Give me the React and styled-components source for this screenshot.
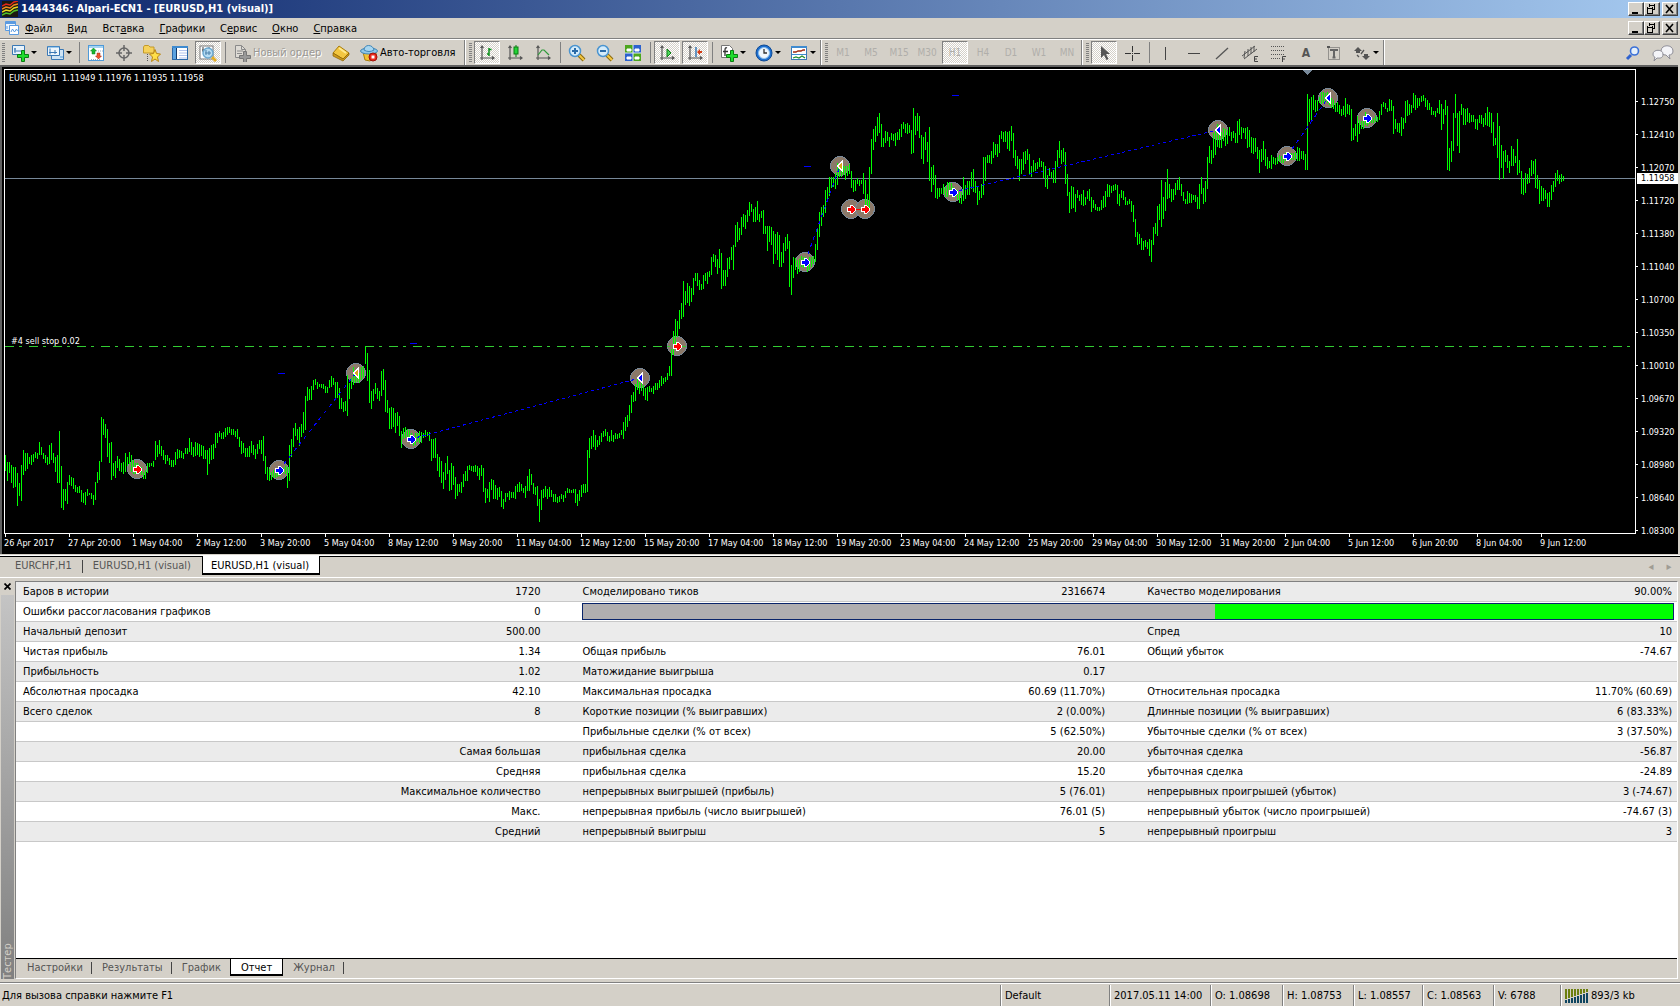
import React, { useState } from 'react'
import styled, { createGlobalStyle, css } from 'styled-components'

const menu = [['', 'Ф', 'айл'], ['', 'В', 'ид'], ['Вст', 'а', 'вка'], ['', 'Г', 'рафики'], ['С', 'е', 'рвис'], ['', 'О', 'кно'], ['', 'С', 'правка']]
const periods = ['M1', 'M5', 'M15', 'M30', 'H1', 'H4', 'D1', 'W1', 'MN']
const chartTabs = ['EURCHF,H1', 'EURUSD,H1 (visual)', 'EURUSD,H1 (visual)']
const testerTabs = ['Настройки', 'Результаты', 'График', 'Отчет', 'Журнал']
const prices = ['1.12750', '1.12410', '1.12070', '1.11720', '1.11380', '1.11040', '1.10700', '1.10350', '1.10010', '1.09670', '1.09320', '1.08980', '1.08640', '1.08300']
const times = ['26 Apr 2017', '27 Apr 20:00', '1 May 04:00', '2 May 12:00', '3 May 20:00', '5 May 04:00', '8 May 12:00', '9 May 20:00', '11 May 04:00', '12 May 12:00', '15 May 20:00', '17 May 04:00', '18 May 12:00', '19 May 20:00', '23 May 04:00', '24 May 12:00', '25 May 20:00', '29 May 04:00', '30 May 12:00', '31 May 20:00', '2 Jun 04:00', '5 Jun 12:00', '6 Jun 20:00', '8 Jun 04:00', '9 Jun 12:00']
const report = [
    ['Баров в истории', '1720', 'Смоделировано тиков', '2316674', 'Качество моделирования', '90.00%'],
    ['Ошибки рассогласования графиков', '0'],
    ['Начальный депозит', '500.00', '', '', 'Спред', '10'],
    ['Чистая прибыль', '1.34', 'Общая прибыль', '76.01', 'Общий убыток', '-74.67'],
    ['Прибыльность', '1.02', 'Матожидание выигрыша', '0.17', '', ''],
    ['Абсолютная просадка', '42.10', 'Максимальная просадка', '60.69 (11.70%)', 'Относительная просадка', '11.70% (60.69)'],
    ['Всего сделок', '8', 'Короткие позиции (% выигравших)', '2 (0.00%)', 'Длинные позиции (% выигравших)', '6 (83.33%)'],
    ['', '', 'Прибыльные сделки (% от всех)', '5 (62.50%)', 'Убыточные сделки (% от всех)', '3 (37.50%)'],
    ['', 'Самая большая', 'прибыльная сделка', '20.00', 'убыточная сделка', '-56.87'],
    ['', 'Средняя', 'прибыльная сделка', '15.20', 'убыточная сделка', '-24.89'],
    ['', 'Максимальное количество', 'непрерывных выигрышей (прибыль)', '5 (76.01)', 'непрерывных проигрышей (убыток)', '3 (-74.67)'],
    ['', 'Макс.', 'непрерывная прибыль (число выигрышей)', '76.01 (5)', 'непрерывный убыток (число проигрышей)', '-74.67 (3)'],
    ['', 'Средний', 'непрерывный выигрыш', '5', 'непрерывный проигрыш', '3'],
]
const status = [['Default', 109], ['2017.05.11 14:00', 101], ['O: 1.08698', 72], ['H: 1.08753', 71], ['L: 1.08557', 69], ['C: 1.08563', 71], ['V: 6788', 67]]

// high/low of every bar, three units to a pixel, counted down from base
const segments = [
    { x: 5, base: 330, bars: '375/423 395/452 395/428 405/458 410/475 410/470 430/527 458/498 405/512 360/435 368/422 370/418 380/402 375/405 372/395 365/385 368/388 336/375 350/375 368/388 375/400 380/405 345/402 340/390 370/398 380/425 375/458 303/458 408/535 476/540 476/512 457/522 434/465 442/468 445/478 465/485 470/488 468/490 480/515 488/518 485/524 477/498 488/496 488/508 495/524 455/510 426/460 392/450 261/396 266/315 282/325 297/382 338/398 336/450 400/437 392/444 378/414 388/424 398/426 396/432 370/426 380/408 366/402 376/426 390/432 400/432 400/430 405/430 410/435 425/447 420/447 400/428 398/412 400/408 392/412 333/390 345/382 330/372 348/378 360/390 375/403 375/392 385/405 390/410 390/410 365/405 358/387 360/385 362/385 370/387 355/372 353/372 323/365 335/375 350/380 335/378 338/376 343/380 345/378 348/388 360/388 360/434 355/402 345/390 342/388 310/353 308/340 303/322 310/328 306/326 293/320 292/315 290/310 298/316 297/316 303/320 297/328 320/352 334/372 340/368 353/382 353/380 348/382 332/368 345/375 358/388 342/372 330/356 330/372 318/392 378/432 410/450 418/452 425/450 420/445 420/443 415/440 418/438 412/432 415/430 408/432 412/474 345/452 327/380 294/350 279/317 297/330 290/347 283/320 246/310 197/300 170/213 178/210 168/210 150/180 148/166 156/176 163/172 162/175 163/178 168/188 170/190 150/175 138/172 144/165 156/208 155/205 175/238 205/238 215/246 213/242 135/258 160/208 145/178 110/165 120/160 115/157 130/158 110/150 108/140 48/102 68/152 120/220 184/236 178/214 158/193 175/208 184/212 122/198 116/180 150/246 210/250 234/298 232/297 234/290 250/308 247/288 258/318' },
    { x: 401, base: 330, bars: '303/353 295/328 291/325 298/330 300/335 310/340 318/347 310/345 308/335 303/340 305/340 310/325 300/322 306/318 306/332 326/392 327/383 324/383 372/422 380/440 393/458 426/477 400/450 378/432 420/483 398/480 408/465 441/507 462/498 462/487 456/488 432/470 423/452 408/452 405/420 408/424 407/426 405/425 408/438 414/450 405/438 414/487 474/518 477/505 456/517 447/480 450/507 465/507 474/510 471/500 483/530 507/537 489/515 488/500 483/510 486/503 486/504 468/507 462/486 456/486 462/484 474/490 468/503 438/482 417/483 432/464 459/492 471/495 468/528 507/576 480/540 477/503 468/500 478/508 471/500 480/500 492/515 492/516 501/518 498/516 492/506 495/516 483/503 474/490 476/488 480/490 477/490 477/518 492/528 480/512 465/500 462/490 462/488 360/486 324/384 318/357 300/350 315/360 330/350 318/345 309/336 304/322 297/318 306/332 318/335 300/333 315/336 309/328 311/328 309/325 300/315 276/327 262/303 255/290 225/273 195/248 186/216 162/213 147/180 155/192 150/182 165/198 174/210 171/213 168/186 174/186 168/192 159/180 159/180 150/174 138/168 144/162 141/155 129/150 108/138 57/138' },
    { x: 673, base: 60, bars: '813/885 777/860 783/830 750/807 729/777 663/771 693/735 669/730 678/738 684/726 654/705 639/663 640/678 660/690 672/690 645/687 639/663 636/672 633/651 591/645 582/606 585/621 597/642 567/624 579/687 630/678 630/678 594/651 591/627 561/600 555/630 495/561 486/546 504/540 471/525 462/501 465/507 450/486 426/468 432/456 447/486 441/486 423/480 462/486 453/474 450/522 498/522 498/573 498/546 501/555 513/612 522/582 516/600 525/621 576/621 549/609 531/573 522/567 543/681 615/705 591/654 594/630 600/642 597/636 588/620 592/625 590/620 598/636 590/630 590/620 588/612 552/606 504/570 456/531 441/498 435/471 390/459 381/417 351/408 351/384 351/380 340/387 310/375 320/350 320/350 318/345 318/360 318/348 312/342 333/384 360/396 360/393 354/372 360/378 359/372 339/402 360/435 402/445 321/444 237/342 207/270 198/246 171/228 159/219 192/261 234/261 213/249 216/243 231/261 219/240 222/243 219/258 216/240 207/240 192/231 186/207 192/219 189/222 195/219 210/282 144/279 168/225 159/213 168/234 225/297 231/312 216/270 246/306 201/363 321/396 315/375 345/414 384/417 384/411 384/402 372/402 380/410 366/410 366/400 368/405 380/410 388/410 390/420 395/428 395/432 351/423 375/417 363/405 363/405 336/387 327/396 363/399 378/435 393/420 372/414 291/405 291/363 285/309 285/309 273/312 246/294 252/285 252/291 225/279 213/237 216/246 213/246 216/267 213/273 198/243 219/294 270/318 288/327 297/363 297/342 276/330 273/312 267/300 282/342 318/351 300/336 309/333 306/327 294/321' },
    { x: 1041, base: 60, bars: '303/321 306/354 318/381 345/387 324/348 336/354 330/369 303/369 270/321 243/294 270/312 264/306 276/372 342/408 396/459 378/447 381/444 402/456 390/414 405/423 402/435 390/438 411/435 393/417 387/423 411/456 420/444 432/450 441/453 441/453 420/450 408/444 393/441 372/411 375/411 378/399 375/393 372/390 375/432 402/438 390/414 393/420 411/435 423/435 417/432 423/456 435/486 477/531 516/555 522/552 534/570 543/570 540/561 546/567 537/588 540/606 501/555 489/522 438/528 432/480 360/501 411/477 366/453 327/417 372/414 387/426 387/420 369/405 360/390 351/390 372/408 396/423 417/432 393/432 399/429 402/429 405/420 405/426 411/447 372/447 351/402 384/432 363/426 291/387 258/309 270/312 220/294 210/285 192/260 220/264 215/264 204/243 207/258 210/252 201/228 216/243 213/234 219/249 183/249 177/225 201/237 204/219 204/237 201/264 210/261 231/279 234/282 234/276 261/297 270/339 267/306 243/300 267/318 291/327 303/324 285/327 291/312 294/315 290/312 285/306 288/308 288/308 278/303 283/300 278/298 280/300 280/300 275/300 261/303 264/303 273/297 273/300 282/330 102/330 117/186 111/180 105/150 120/156 120/153 110/130 95/132 95/130 100/125 95/130 105/135 114/144 120/147 129/156 126/156 135/162 147/168 138/165 114/171 132/162 135/165 147/243 204/240 192/228 168/246 180/222' },
    { x: 1361, base: 60, bars: '183/207 183/207 156/195 165/198 170/192 172/190 174/190 168/186 170/186 153/180 132/165 126/141 129/147 144/156 117/153 120/153 138/222 177/207 189/216 189/219 171/228 174/207 123/189 120/168 132/165 135/159 99/144 105/150 114/144 114/138 108/126 105/123 114/141 120/150 129/150 141/165 153/165 153/171 144/159 120/162 132/210 147/192 120/165 138/330 264/333 243/306 159/273 102/174 159/258 153/279 132/165 144/195 147/195 144/186 159/189 165/186 165/186 177/207 177/210 165/189 165/192 174/201 159/195 141/198 156/201 159/219 186/258 234/255 159/294 198/360 255/324 273/357 270/306 285/324 303/339 258/318 267/318 288/309 237/345 300/339 333/402 357/405 339/399 342/372 324/369 300/348 303/342 297/384 345/387 360/432 378/423 384/423 390/417 399/441 396/441 375/420 363/396 339/381 330/363 345/372 342/366 348/363' },
]
const barsPath = segments.map(({ x, base, bars }) => bars.split(' ').map((bar, i) => {
    const [high, low] = bar.split('/').map(v => Math.round(base + v / 3))
    return `M${x + i * 2 + 0.5} ${high}V${low}`
}).join('')).join('')

const markers = [
    [137, 469, 'open', '#f00'], [279, 470, 'open', '#00f'], [356, 373, 'close', '#daa520'], [411, 439, 'open', '#00f'],
    [640, 378, 'close', '#00f'], [677, 346, 'open', '#f00'], [805, 262, 'open', '#00f'], [840, 166, 'close', '#daa520'],
    [851, 209, 'open', '#f00'], [865, 209, 'open', '#f00'], [953, 192, 'open', '#00f'], [1218, 130, 'close', '#00f'],
    [1287, 156, 'open', '#00f'], [1328, 98, 'close', '#00f'], [1367, 118, 'open', '#00f'],
]

function Chart() {
    return (
        <svg width="1630" height="463" viewBox="5 70 1630 463" fill="none" shapeRendering="crispEdges">
            <path d="M5 178.5H1635" stroke="#778899" />
            {markers.map(([x, y]) => <circle key={`${x}-${y}`} cx={x} cy={y} r="9.5" fill="#8b7969" stroke="#778899" />)}
            <path d="M5 346.5H1635" stroke="#32cd32" strokeDasharray="9 5 3 7" />
            <path d={barsPath} stroke="#0f0" />
            <g stroke="#00f">
                <path d="M279 470L356 373M805 262L840 166M1287 156L1328 98" strokeDasharray="4 4" />
                <path d="M411 439L640 378M953 192L1218 130" strokeDasharray="3 3" />
                <path d="M278 373.5h7M410 343.5h7M804 166.5h7M952 95.5h7" />
            </g>
            <path d="M851 209.5H865" stroke="#f00" />
            <path d="M1302 70h10l-5 5z" fill="#778899" />
            {markers.map(([x, y, kind, color]) => (
                <path
                    key={`${x}-${y}`}
                    d={kind === 'open'
                        ? `M${x - 3} ${y - 1}h3v-2h1l3 3v1l-3 3h-1v-2h-3z`
                        : `M${x + 2} ${y - 4}v8l-4 -4z`}
                    fill={color}
                    stroke="#fff"
                    strokeWidth="2"
                    paintOrder="stroke"
                />
            ))}
        </svg>
    )
}

const Lens = ({ minus }) => (
    <>
        <path d="M11 11l5 5" stroke="#8a6a10" strokeWidth="4" />
        <path d="M11 11l5 5" stroke="#f5c842" strokeWidth="2" />
        <circle cx="7" cy="7" r="5.500" fill="#d5ecfb" stroke="#4a94d0" strokeWidth="1.500" />
        <path d={minus ? 'M4 7h6' : 'M4 7h6M7 4v6'} stroke="#2a6ba8" strokeWidth="2" />
    </>
)
const Plus = () => <path d="M10.500 6.500h3v4h4v3h-4v4h-3v-4h-4v-3h4z" fill="#1fdc2c" stroke="#0a7d12" />
const Axes = () => <path d="M4 2v14M2 14h14M2.500 4L4 2l1.500 2M14 12.500L16 14l-2 1.500" stroke="#555" strokeWidth="1.200" />

const icons = {
    newChart: <><path d="M1.500 1.500h12v9h-12z" fill="#e8f3fb" stroke="#3a78b5" /><path d="M4 4v5M3 7h7M3 5h2" stroke="#3a78b5" /><Plus /></>,
    profiles: <><path d="M5.500 5.500h12v10h-12z" fill="#cfe4f5" stroke="#3a78b5" /><path d="M1.500 2.500h12v9h-12z" fill="#eef6fc" stroke="#3a78b5" /><path d="M4 4.500v6M3 8.500h8M9 6v4" stroke="#3a78b5" /><path d="M2 3h11M14 13h3" stroke="#4f9ad8" /></>,
    market: <><rect x="1.500" y="1.500" width="15" height="15" fill="#fff" stroke="#4f9ad8" /><path d="M2 3h14" stroke="#a6d3f2" strokeWidth="2" /><path d="M4 15.500h10M11 7h5" stroke="#9ab" strokeDasharray="1 1" /><path d="M6.500 4l3 3H8v3H5V7H3.500z" fill="#19b531" stroke="#0a7d12" strokeWidth=".5" /><path d="M11.500 15l3-3H13V9h-3v3H8.500z" fill="#f0502a" stroke="#a02810" strokeWidth=".5" /></>,
    crosshair: <><circle cx="9" cy="9" r="5" stroke="#666" strokeWidth="1.500" /><path d="M9 1v6M9 11v6M1 9h6M11 9h6" stroke="#666" strokeWidth="1.500" /></>,
    navigator: <><path d="M.5 3l1-1.500h4l1.500 1.500h4v6H.500z" fill="#f6d25b" stroke="#c49a2a" /><path d="M4.500 10v7" stroke="#555" strokeDasharray="1 1" /><path d="M12 5.500l1.500 4 4 .5-3 3 1 4.500-3.500-2.500-3.500 2.500 1-4.500-3-3 4-.5z" fill="#ffdf4a" stroke="#b98512" /></>,
    data: <><rect x="1.500" y="2.500" width="15" height="13" fill="#fff" stroke="#2c68a8" /><path d="M1 3h16" stroke="#3f8bd0" strokeWidth="2" /><path d="M2 4h3v11H2z" fill="#5ba2e0" /><path d="M8 6.500h8M8 9h8M8 11.500h8M8 14h8" stroke="#b4c4ee" /><path d="M5.500 4v11" stroke="#13396b" /></>,
    tester: <><rect x="1" y="2" width="13" height="13" fill="#fff" stroke="#777" /><path d="M4 3v5M3 6h5M10 3v4" stroke="#444" /><path d="M13 13l4 4" stroke="#e4ae26" strokeWidth="3" /><circle cx="9" cy="9" r="5" fill="#b6dcf3" stroke="#6ba8d0" strokeWidth="1.500" /><path d="M7 6v5M10 7v4M6 9h6" stroke="#4d81aa" /></>,
    order: <><path d="M2.500 1.500h6l4 4v8h-10z" fill="#dedbd5" stroke="#8a8a8a" /><path d="M8.500 1.500v4h4M4 7h6M4 9.500h5" stroke="#8a8a8a" /><path d="M10.500 7.500h3v4h4v3h-4v4h-3v-4h-4v-3h4z" fill="#999" stroke="#777" /></>,
    book: <><path d="M7 2l10 7-6 6-10-6z" fill="#f3c640" stroke="#a87c0a" /><path d="M1 9v3l10 5 6-6V9l-6 6z" fill="#cf9a1a" stroke="#8a6206" strokeWidth=".7" /><path d="M7 4l7 5" stroke="#ffe98c" strokeWidth="2" /></>,
    auto: <><path d="M3 8l2 8 5 1 6-5V7z" fill="#f2c235" stroke="#a87c0a" /><ellipse cx="9" cy="7" rx="8.500" ry="3" fill="#8ec6e8" stroke="#3f86b8" /><path d="M4 6c0-6 9-6 10 0-3 2-7 2-10 0z" fill="#a8d6f0" stroke="#3f86b8" /><circle cx="13" cy="13" r="4" fill="#e8291d" stroke="#a0140c" /><rect x="11.500" y="11.500" width="3" height="3" fill="#fff" /></>,
    bars: <><Axes /><path d="M11 4v8M9 10h2M11 5.500h2.500" stroke="#0a8f1a" strokeWidth="1.500" /></>,
    candles: <><Axes /><path d="M10 1v12" stroke="#0a7d12" /><rect x="8" y="3" width="4" height="7" fill="#22d436" stroke="#0a7d12" /></>,
    line: <><Axes /><path d="M4 11l4-5h2l5 5" stroke="#2f9a3a" strokeWidth="1.200" /></>,
    zoomIn: <Lens />,
    zoomOut: <Lens minus />,
    tile: <><path d="M1 1h8v8H1zM9 9h8v8H9z" fill="#4da61e" /><path d="M9 1h8v8H9zM1 9h8v8H1z" fill="#2c62cf" /><path d="M3 5h4v2H3zM11 5h4v2h-4zM3 13h4v2H3zM11 13h4v2h-4z" fill="#fff" stroke="#fff" /><path d="M1 9h16M9 1v16" stroke="#dfe9f7" /></>,
    scroll: <><Axes /><path d="M9 5l4 4-4 4z" fill="#4dd65a" stroke="#0a7d12" /></>,
    shift: <><Axes /><path d="M10 3v10" stroke="#3a78b5" strokeWidth="1.500" /><path d="M11 8l3-3v2h2v2h-2v2z" fill="#d63c14" /></>,
    indicators: <><path d="M1.500 1.500h8l3 3v9h-11z" fill="#fff" stroke="#777" /><path d="M7 4c-2-1-2 1-2 3v5M3 7.500h5" stroke="#333" strokeWidth="1.300" /><Plus /></>,
    clock: <><circle cx="9" cy="9" r="8" fill="#1d6fd0" stroke="#0f4a94" /><circle cx="9" cy="9" r="5.500" fill="#eef6fd" stroke="#8dc0ee" /><path d="M9 5v4h3" stroke="#333" strokeWidth="1.300" /></>,
    templates: <><rect x="1.500" y="2.500" width="15" height="13" fill="#fff" stroke="#3a78b5" /><path d="M1 3h16" stroke="#3f8bd0" strokeWidth="2" /><path d="M2 10.500h14" stroke="#3f8bd0" /><path d="M3 8h3l2-1h3l2-1h2" stroke="#a02810" strokeWidth="1.300" /><path d="M3 14l3-1 3 1 3-2 3 2" stroke="#1f8f2c" strokeWidth="1.300" /></>,
    cursor: <path d="M6 2v12l3-3 2.500 5 2-1-2.500-5h4z" fill="#555" />,
    cross: <path d="M9.500 2v6M9.500 11v6M2 9.500h6M11 9.500h6M9 9.500h1" stroke="#333" />,
    vline: <path d="M8.500 3v13" stroke="#444" />,
    hline: <path d="M3 9.500h12" stroke="#444" />,
    trend: <path d="M3 15L15 4" stroke="#555" strokeWidth="1.300" />,
    channel: <><path d="M1 12L14 2M3 15L16 5M4 7l-1 7M7 5v7M10 3v7M13 2v6" stroke="#555" /><path d="M17 12.500h-3.500v5H17M13 15h3" stroke="#444" /></>,
    fibo: <><path d="M2 2.500h14M2 6.500h14M2 10.500h14M2 14.500h9" stroke="#555" strokeDasharray="1 1" /><path d="M17 12.500h-3.500V18M13 15h3" stroke="#444" /></>,
    label: <><path d="M3.500 3.500h11v12h-11z" stroke="#555" strokeDasharray="1 1" /><path d="M2 2h3v2H2z" fill="#555" /><path d="M5 6h8M9 6v8M7.500 13.500h3" stroke="#666" strokeWidth="2" /></>,
    arrows: <><path d="M5 3l4 4H7v2H3V7H1zM13 16l4-4h-2v-2h-4v2H9z" fill="#555" /><path d="M4 11l2 2M11 6l-3 4" stroke="#555" strokeWidth="1.300" /></>,
    search: <><path d="M7 11l-4 4" stroke="#2f62cf" strokeWidth="3" /><circle cx="10.500" cy="7" r="4" fill="#e6f0fa" stroke="#3a70d8" strokeWidth="1.600" /></>,
}

const Icon = ({ name }) => <svg width="18" height="18" viewBox="0 0 18 18" fill="none" aria-hidden="true">{icons[name]}</svg>

function Tool({ name, label, pressed, drop }) {
    return (
        <ToolButton $pressed={pressed} $drop={drop} aria-label={label} title={label}>
            <Icon name={name} />
            {drop && <Caret />}
        </ToolButton>
    )
}

function WindowButtons() {
    return (
        <Controls>
            <WinButton aria-label="Свернуть"><svg width="12" height="10" viewBox="0 0 12 10"><path d="M2 8h6v2H2z" /></svg></WinButton>
            <WinButton aria-label="Восстановить"><svg width="12" height="10" viewBox="0 0 12 10" fill="none" stroke="#000" shapeRendering="crispEdges"><path d="M3.500 0v3M3 1h6M8.500 0v6M7 5.500h2M1.500 3v6h5V3M1 4h6" /></svg></WinButton>
            <WinButton $gap aria-label="Закрыть"><svg width="12" height="10" viewBox="0 0 12 10" fill="none" stroke="#000" strokeWidth="1.600"><path d="M2 1l7 8M9 1L2 9" /></svg></WinButton>
        </Controls>
    )
}

export default function App() {
    const [chartTab, setChartTab] = useState(2)
    const [testerTab, setTesterTab] = useState(3)
    return (
        <Window>
            <GlobalStyle />
            <TitleBar>
                <svg width="16" height="16" viewBox="0 0 16 16" fill="none" strokeWidth="1.500">
                    <path d="M0 0h16v16H0z" fill="#1c1a10" />
                    <path d="M0 5l4-2 4 1 4-3 4-1" stroke="#e3281c" /><path d="M0 8l4-2 4 1 4-3 4-1" stroke="#f08a1e" />
                    <path d="M0 11l4-2 4 1 4-3 4-1" stroke="#e8d820" /><path d="M0 14l4-2 4 1 4-3 4-1" stroke="#4ec22a" />
                </svg>
                <h1>1444346: Alpari-ECN1 - [EURUSD,H1 (visual)]</h1>
                <WindowButtons />
            </TitleBar>
            <MenuBar>
                <svg width="14" height="14" viewBox="0 0 14 14" fill="none" stroke="#5b9be0">
                    <path d="M.5.5h10v9H.500z" fill="#eef6fd" /><path d="M1 2h9" strokeWidth="2" /><path d="M4.500 4.500h9v9h-9z" fill="#fff" /><path d="M6 11l1.500-3 2 3 2-3 1 2" /><path d="M2 5v3" />
                </svg>
                {menu.map(([before, key, after]) => <MenuItem key={key + after}>{before}<u>{key}</u>{after}</MenuItem>)}
                <WindowButtons />
            </MenuBar>
            <Toolbar>
                <Grip />
                <Tool name="newChart" label="Новый график" drop />
                <Tool name="profiles" label="Профили" drop />
                <Divider />
                <Tool name="market" label="Обзор рынка" />
                <Tool name="crosshair" label="Окно данных" />
                <Tool name="navigator" label="Навигатор" />
                <Tool name="data" label="Терминал" />
                <Tool name="tester" label="Тестер стратегий" pressed />
                <Divider />
                <TextButton $width={99} disabled><Icon name="order" />Новый ордер</TextButton>
                <Tool name="book" label="MetaEditor" />
                <TextButton $width={109}><Icon name="auto" />Авто-торговля</TextButton>
                <GroupEnd />
                <Grip />
                <Tool name="bars" label="Бары" pressed />
                <Tool name="candles" label="Свечи" />
                <Tool name="line" label="Линия" />
                <Divider />
                <Tool name="zoomIn" label="Увеличить" />
                <Tool name="zoomOut" label="Уменьшить" />
                <Tool name="tile" label="Окна мозаикой" />
                <Divider />
                <Tool name="scroll" label="Автопрокрутка" pressed />
                <Tool name="shift" label="Сдвиг графика" pressed />
                <Divider />
                <Tool name="indicators" label="Индикаторы" drop />
                <Tool name="clock" label="Периоды" drop />
                <Tool name="templates" label="Шаблоны" drop />
                <GroupEnd />
                <Grip />
                {periods.map(period => <ToolButton key={period} $pressed={period === 'H1'} disabled>{period}</ToolButton>)}
                <GroupEnd />
                <Grip />
                <Tool name="cursor" label="Курсор" pressed />
                <Tool name="cross" label="Перекрестие" />
                <Divider />
                <Tool name="vline" label="Вертикальная линия" />
                <Tool name="hline" label="Горизонтальная линия" />
                <Tool name="trend" label="Трендовая линия" />
                <Tool name="channel" label="Канал" />
                <Tool name="fibo" label="Фибоначчи" />
                <ToolButton $letter aria-label="Текст">A</ToolButton>
                <Tool name="label" label="Метка" />
                <Tool name="arrows" label="Стрелки" drop />
                <GroupEnd />
                <Spacer />
                <Tool name="search" label="Поиск" />
                <ChatButton aria-label="Чат">
                    <svg width="22" height="16" viewBox="0 0 22 16" fill="#f4f4f8" stroke="#8d8d96">
                        <path d="M9 6c0-7 12-7 12 0 0 3-2 4-4 4l1 4-4-4c-3 0-5-1-5-4z" /><path d="M1 9c0-5 10-5 10 0s-4 4-6 4l-3 3 1-4c-1 0-2-1-2-3z" />
                    </svg>
                </ChatButton>
            </Toolbar>
            <ChartWindow>
                <PlotRow>
                    <Plot>
                        <Chart />
                        <PlotLabel $top={3} $left={4}>EURUSD,H1&nbsp; 1.11949 1.11976 1.11935 1.11958</PlotLabel>
                        <PlotLabel $top={266} $left={6}>#4 sell stop 0.02</PlotLabel>
                    </Plot>
                    <PriceAxis>
                        {prices.map(price => <span key={price}>{price}</span>)}
                        <LastPrice>1.11958</LastPrice>
                    </PriceAxis>
                </PlotRow>
                <TimeAxis>{times.map(time => <span key={time}>{time}</span>)}</TimeAxis>
            </ChartWindow>
            <ChartTabs role="tablist">
                {chartTabs.map((tab, i) => (
                    <Tab key={i} role="tab" aria-selected={chartTab === i} $active={chartTab === i} $beforeActive={chartTab === i + 1} onClick={() => setChartTab(i)}>{tab}</Tab>
                ))}
                <Spacer />
                <TabScroll aria-label="Влево">◂</TabScroll>
                <TabScroll aria-label="Вправо">▸</TabScroll>
            </ChartTabs>
            <Tester>
                <Side>
                    <button aria-label="Закрыть тестер"><svg width="7" height="7" viewBox="0 0 7 7" stroke="#000" strokeWidth="1.700"><path d="M.5.5l6 6M6.500.5l-6 6" /></svg></button>
                    <div>Тестер</div>
                </Side>
                <Panel>
                    <Report>
                        <table>
                            <colgroup><col width="16%" /><col width="16%" /><col width="18%" /><col width="16%" /><col width="18%" /><col width="16%" /></colgroup>
                            <tbody>
                                {report.map((row, i) => (
                                    <tr key={i}>
                                        {row.map((cell, j) => <td key={j}>{cell}</td>)}
                                        {row.length === 2 && <td colSpan="4"><Quality><div /></Quality></td>}
                                    </tr>
                                ))}
                            </tbody>
                        </table>
                    </Report>
                    <TesterTabs role="tablist">
                        {testerTabs.map((tab, i) => (
                            <TesterTab key={tab} role="tab" aria-selected={testerTab === i} $active={testerTab === i} $beforeActive={testerTab === i + 1} onClick={() => setTesterTab(i)}>{tab}</TesterTab>
                        ))}
                    </TesterTabs>
                </Panel>
            </Tester>
            <StatusBar>
                <Help>Для вызова справки нажмите F1</Help>
                {status.map(([text, width]) => <Status key={text} $width={width}>{text}</Status>)}
                <Status $width={120}>
                    <svg width="23" height="14" viewBox="0 0 23 14" shapeRendering="crispEdges">
                        {[0, 1, 2, 3, 4, 5, 6, 7].map(i => (
                            <g key={i}>
                                <rect x={i * 3} y="0" width="2" height={10 - i} fill="#6b7f0e" />
                                <rect x={i * 3} y={11 - i} width="2" height={3 + i} fill="#0f4560" />
                            </g>
                        ))}
                    </svg>
                    893/3 kb
                </Status>
            </StatusBar>
        </Window>
    )
}

const GlobalStyle = createGlobalStyle`
    *{
        box-sizing: border-box;
    }
    body{
        margin: 0;
        background-color: #d4d0c8;
        overflow: hidden;
    }
    body, button{
        font-family: "DejaVu Sans Condensed", "Noto Sans", sans-serif;
        font-size: 11px;
        color: #000;
    }
    button{
        margin: 0;
        padding: 0;
        border: none;
        background: none;
    }
`

const Window = styled.div`
    display: flex;
    flex-direction: column;
    min-height: 100vh;
`

const TitleBar = styled.header`
    display: flex;
    align-items: center;
    height: 18px;
    padding: 0 2px;
    background: linear-gradient(to right, #0a246a, #a6caf0);
    h1{
        margin: 0 0 0 3px;
        font-size: 11px;
        line-height: 18px;
        color: #fff;
    }
`

const MenuBar = styled.nav`
    display: flex;
    align-items: center;
    height: 22px;
    padding: 0 2px 2px 5px;
    gap: 15px;
    border-bottom: 1px solid #fff;
    box-shadow: inset 0 -1px #808080;
    & > svg{
        margin-right: -9px;
    }
`

const MenuItem = styled.button`
    padding-top: 2px;
`

const Controls = styled.div`
    display: flex;
    margin-left: auto;
`

const WinButton = styled.button`
    display: flex;
    align-items: center;
    justify-content: center;
    width: 16px;
    height: 14px;
    margin-left: ${({ $gap }) => $gap ? "2px" : "0"};
    background-color: #d4d0c8;
    border: 1px solid;
    border-color: #fff #404040 #404040 #fff;
    box-shadow: inset -1px -1px #808080;
`

const Toolbar = styled.div`
    display: flex;
    align-items: center;
    height: 25px;
    padding-right: 1px;
`

const Grip = styled.div`
    width: 6px;
    height: 19px;
    border: solid transparent;
    border-width: 0 1px 0 2px;
    background: repeating-linear-gradient(#808080 0 1px, transparent 1px 2px) padding-box;
`

const Divider = styled.div`
    width: 6px;
    height: 21px;
    border-left: 3px solid transparent;
    background: linear-gradient(to right, #808080 1px, transparent 1px) padding-box;
`

const GroupEnd = styled.div`
    width: 3px;
    height: 25px;
    background: linear-gradient(to right, #808080 1px, #fff 1px 2px, transparent 2px);
`

const ToolButton = styled.button`
    display: flex;
    align-items: center;
    justify-content: center;
    gap: 2px;
    width: ${({ $drop }) => $drop ? "35px" : "26px"};
    height: 23px;
    margin: ${({ $drop }) => $drop ? "0" : "0 1px"};
    font-size: ${({ $letter }) => $letter ? "12px" : "10px"};
    font-weight: ${({ $letter }) => $letter ? "bold" : "normal"};
    color: #555;
    &:disabled{
        color: #b0aeaa;
    }
    ${({ $pressed }) => $pressed && css`
        border: 1px solid;
        border-color: #808080 #fff #fff #808080;
        background: repeating-conic-gradient(#fff 0 25%, #d4d0c8 0 50%) 0 0 / 2px 2px;
    `}
`

const ChatButton = styled(ToolButton)`
    width: 30px;
`

const TextButton = styled.button`
    display: flex;
    align-items: center;
    gap: 2px;
    width: ${({ $width }) => $width}px;
    height: 23px;
    padding-left: 5px;
    white-space: nowrap;
    &:disabled{
        color: #9a9894;
        text-shadow: 1px 1px #fff;
    }
`

const Caret = styled.span`
    border: solid transparent;
    border-width: 3px 3px 0;
    border-top-color: #000;
`

const Spacer = styled.div`
    flex: 1;
`

const ChartWindow = styled.main`
    margin-right: 2px;
    padding: 2px 0 0 2px;
    border: solid;
    border-width: 2px 0 0 2px;
    border-color: #606060;
    background-color: #000;
    color: #fff;
    font-size: 9px;
`

const PlotRow = styled.div`
    display: flex;
    height: 465px;
`

const Plot = styled.div`
    position: relative;
    flex: 1;
    min-width: 0;
    overflow: hidden;
    border: 1px solid #fff;
    svg{
        display: block;
    }
`

const PlotLabel = styled.div`
    position: absolute;
    top: ${({ $top }) => $top}px;
    left: ${({ $left }) => $left}px;
    line-height: 11px;
`

const PriceAxis = styled.div`
    position: relative;
    width: 42px;
    padding-top: 16px;
    span{
        display: flex;
        align-items: center;
        height: 33px;
    }
    span::before{
        content: "";
        width: 2px;
        height: 1px;
        margin-right: 3px;
        background-color: #fff;
    }
`

const LastPrice = styled.div`
    position: absolute;
    top: 104px;
    left: 1px;
    right: 0;
    padding-left: 4px;
    line-height: 11px;
    background-color: #fff;
    color: #000;
`

const TimeAxis = styled.div`
    display: flex;
    height: 20px;
    overflow: hidden;
    span{
        flex: none;
        width: 64px;
        white-space: nowrap;
        line-height: 12px;
    }
    span::before{
        content: "";
        display: block;
        width: 1px;
        height: 3px;
        margin-left: 1px;
        background-color: #fff;
    }
`

const ChartTabs = styled.div`
    display: flex;
    height: 23px;
    padding: 0 2px 1px 5px;
    border-top: 1px solid #fff;
    border-bottom: 1px solid #fff;
    box-shadow: inset 0 1px #000;
    margin-top: 1px;
`

const Tab = styled.button`
    position: relative;
    height: 19px;
    padding: 0 11px 0 10px;
    color: #555;
    &::after{
        content: "";
        position: absolute;
        top: 4px;
        right: 0;
        height: 13px;
        border-right: ${({ $beforeActive }) => $beforeActive ? "none" : "1px solid #444"};
    }
    ${({ $active }) => $active && css`
        padding: 2px 10px 0 8px;
        color: #000;
        background-color: #fff;
        border: solid #000;
        border-width: 0 1px 2px 1px;
        &::after{
            display: none;
        }
    `}
`

const TabScroll = styled.button`
    width: 18px;
    color: #a09c94;
`

const Tester = styled.section`
    display: flex;
    flex: 1;
    padding: 3px 2px 0 0;
`

const Side = styled.div`
    display: flex;
    flex-direction: column;
    width: 15px;
    button{
        height: 14px;
        padding: 0 1px 4px 0;
        line-height: 0;
    }
    div{
        flex: 1;
        width: 13px;
        margin-left: 1px;
        writing-mode: vertical-rl;
        transform: rotate(180deg);
        background: linear-gradient(#808080, #c4c4c4);
        color: #d4d0c8;
        line-height: 13px;
    }
`

const Panel = styled.div`
    display: flex;
    flex-direction: column;
    flex: 1;
    border: 1px solid;
    border-color: #808080 #fff #fff #808080;
`

const Report = styled.div`
    flex: 1;
    background-color: #fff;
    border-bottom: 1px solid #000;
    table{
        width: 100%;
        table-layout: fixed;
        border-collapse: separate;
        border-spacing: 0;
    }
    tr:nth-child(odd){
        background-color: #ebebeb;
    }
    td{
        height: 20px;
        padding: 0 7px;
        border-bottom: 1px solid #c8c8c8;
        white-space: nowrap;
    }
    td:nth-child(even){
        text-align: right;
    }
    td:nth-child(3), td:nth-child(5){
        padding-left: 35px;
    }
    td:nth-child(6){
        padding-right: 5px;
    }
    td[colspan]{
        padding: 0 3px 0 34px;
    }
`

const Quality = styled.div`
    height: 17px;
    border: 1px solid #0a246a;
    background-color: #b0aeb0;
    div{
        width: 42%;
        height: 100%;
        margin-left: auto;
        background-color: #0f0;
    }
`

const TesterTabs = styled.div`
    display: flex;
    height: 19px;
    padding-left: 1px;
`

const TesterTab = styled(Tab)`
    height: 17px;
    padding: ${({ $active }) => $active ? "2px 10px 0" : "0 9px 0 10px"};
    &::after{
        top: 3px;
        height: 12px;
    }
`

const StatusBar = styled.footer`
    display: flex;
    height: 24px;
    margin-top: 3px;
    padding-top: 2px;
    border-top: 1px solid #808080;
    box-shadow: inset 0 1px #fff;
    line-height: 21px;
`

const Help = styled.div`
    flex: 1;
    padding-left: 2px;
`

const Status = styled.div`
    display: flex;
    align-items: center;
    gap: 3px;
    width: ${({ $width }) => $width}px;
    padding-left: 4px;
    border-left: 1px solid #808080;
    box-shadow: inset 1px 0 #fff;
    white-space: nowrap;
`
